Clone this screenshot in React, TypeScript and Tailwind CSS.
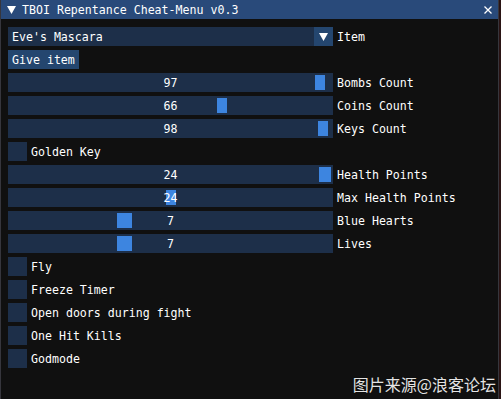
const font = "font-['DejaVu_Sans_Mono','Liberation_Mono',monospace] text-[11.6px] leading-[21px] text-white";

const FRAME_W = 325;

interface SliderProps {
  label: string;
  value: number;
  max: number;
}

function Slider(props: SliderProps) {
  const { label, value, max } = props;
  // ImGui grab: width = inner / (range + 1), at least 10px
  const inner = FRAME_W - 4;
  const grabW = Math.max(10, Math.floor(inner / (max + 1)));
  const left = 2 + (value / max) * (inner - grabW);
  return (
    <div className="flex items-center gap-[4px]">
      <div className="relative h-[19px] w-[325px] bg-[#1d2f49] text-center">
        <div className="absolute top-[2px] h-[15px] bg-[#3d85e0]" style={{ left: Math.round(left), width: grabW }} />
        <span className="relative">{value}</span>
      </div>
      <span className="h-[19px]">{label}</span>
    </div>
  );
}

function Checkbox({ label }: { label: string }) {
  return (
    <div className="flex items-center gap-[4px]">
      <div className="h-[19px] w-[19px] bg-[#1d2f49]" />
      <span className="h-[19px]">{label}</span>
    </div>
  );
}

export default function App() {
  return (
    <div className={`relative flex h-[399px] w-[501px] bg-[#2a1414] ${font}`}>
      <div className="flex w-[499px] flex-col border-x border-[#36363d] bg-[#101010]">
        {/* title bar */}
        <div className="flex h-[19px] items-center bg-[#294a7a] pl-[6px] pr-[6px]">
          <svg width="9" height="8" viewBox="0 0 9 8" className="mr-[6px]">
            <path d="M0 0 L9 0 L4.5 8 Z" fill="white" />
          </svg>
          <span className="h-[19px]">TBOI Repentance Cheat-Menu v0.3</span>
          <svg width="8" height="8" viewBox="0 0 8 8" className="ml-auto">
            <path d="M0.5 0.5 L7.5 7.5 M7.5 0.5 L0.5 7.5" stroke="white" strokeWidth="1.3" />
          </svg>
        </div>

        <div className="flex flex-col gap-[4px] pl-[7px] pt-[8px]">
          <div className="flex items-center gap-[4px]">
            <div className="flex h-[19px] w-[325px] bg-[#1d2f49]">
              <span className="h-[19px] flex-1 pl-[4px]">Eve's Mascara</span>
              <div className="flex h-[19px] w-[19px] items-center justify-center bg-[#24466f]">
                <svg width="9" height="8" viewBox="0 0 9 8">
                  <path d="M0 0 L9 0 L4.5 8 Z" fill="white" />
                </svg>
              </div>
            </div>
            <span className="h-[19px]">Item</span>
          </div>
          <div className="flex">
            <div className="h-[19px] bg-[#24466f] px-[4px]">Give item</div>
          </div>
          <Slider label="Bombs Count" value={97} max={99} />
          <Slider label="Coins Count" value={66} max={99} />
          <Slider label="Keys Count" value={98} max={99} />
          <Checkbox label="Golden Key" />
          <Slider label="Health Points" value={24} max={24} />
          <Slider label="Max Health Points" value={24} max={48} />
          <Slider label="Blue Hearts" value={7} max={20} />
          <Slider label="Lives" value={7} max={20} />
          <Checkbox label="Fly" />
          <Checkbox label="Freeze Timer" />
          <Checkbox label="Open doors during fight" />
          <Checkbox label="One Hit Kills" />
          <Checkbox label="Godmode" />
        </div>
      </div>

      {/* watermark */}
      <div className="absolute bottom-[5px] right-[5px] font-['Noto_Sans_CJK_SC',sans-serif] text-[16px] leading-[20px] text-[#e4e4e4] [text-shadow:0_0_1px_#000]">
        图片来源@浪客论坛
      </div>
    </div>
  );
}
